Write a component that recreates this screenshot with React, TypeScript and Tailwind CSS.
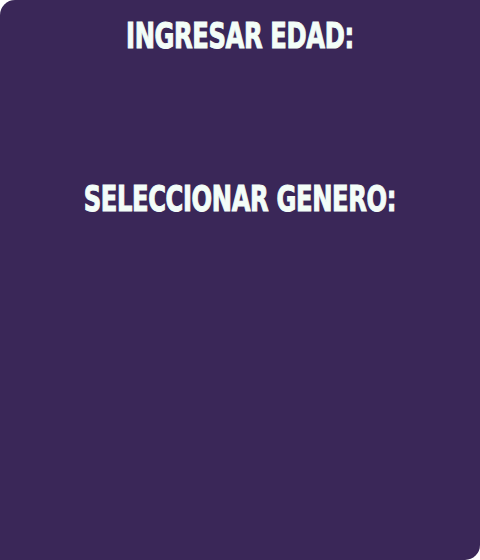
import React from 'react';

// Impact isn't installed: condensed bold squeezed horizontally to get close
const labelCls =
  "text-[#f3fdf8] text-[35px] leading-[38px] font-bold tracking-[-0.5px] scale-x-[0.77] [-webkit-text-stroke:1px_#f3fdf8] [font-family:Impact,'DejaVu_Sans_Condensed',sans-serif]";

export default function App() {
  return (
    <div className="w-[480px] h-[560px] bg-white">
      <div className="h-full bg-[#3a2758] rounded-tl-[15px] rounded-br-[15px] flex flex-col items-center pt-[17px]">
        {/* Edad */}
        <h2 className={labelCls}>INGRESAR EDAD:</h2>
        <div className="h-[125px]" />
        {/* Genero */}
        <h2 className={labelCls}>SELECCIONAR GENERO:</h2>
      </div>
    </div>
  );
}
